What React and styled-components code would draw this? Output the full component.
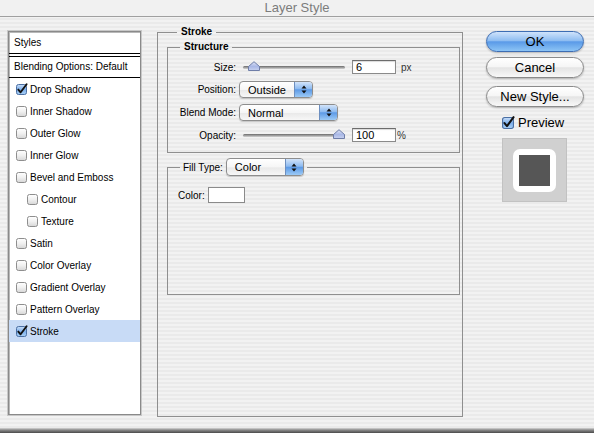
import React from 'react';
import styled, { createGlobalStyle } from 'styled-components';

const GlobalStyle = createGlobalStyle`
  html, body {
    margin: 0;
    padding: 0;
    background: #eeeeee;
  }
  body {
    font-family: "Liberation Sans", Arial, sans-serif;
    font-size: 10px;
    color: #000;
  }
`;

const pinstripe = `repeating-linear-gradient(to bottom, #f2f2f2 0px, #f2f2f2 2px, #eaeaea 2px, #eaeaea 4px)`;

const Window = styled.div`
  width: 594px;
  height: 433px;
  display: flex;
  flex-direction: column;
  background: ${pinstripe};
  overflow: hidden;
`;

const TitleBar = styled.div`
  height: 16px;
  line-height: 15px;
  border-bottom: 1px solid #a0a0a0;
  text-align: center;
  font-size: 13px;
  color: #7c7c7c;
  background: #f1f1f1;
`;

const Body = styled.div`
  flex: 1;
  display: flex;
  align-items: flex-start;
  padding-left: 8px;
`;

const BottomEdge = styled.div`
  height: 5px;
  background: linear-gradient(to bottom, #d6d6d6, #8a8a8a 40%, #4a4a4a);
`;

/* ---------- styles list ---------- */

const StyleList = styled.div`
  margin-top: 14px;
  width: 133px;
  height: 384px;
  box-sizing: border-box;
  background: #fff;
  border: 1px solid #8a8a8a;
  box-shadow: inset 1px 1px 0 #b8b8b8, 0 0 0 1px #c8c8c8;
  display: flex;
  flex-direction: column;
`;

const ListHeader = styled.div`
  height: 21px;
  line-height: 21px;
  padding-left: 5px;
  border-bottom: 1px solid #000;
`;

const BlendingRow = styled.div`
  margin-top: 2px;
  height: 20px;
  line-height: 20px;
  padding-left: 5px;
  border-top: 1px solid #000;
  border-bottom: 1px solid #000;
`;

const StyleItem = styled.div`
  height: 22px;
  display: flex;
  align-items: center;
  gap: 3px;
  padding-left: ${p => (p.$indent ? 18 : 7)}px;
  background: ${p => (p.$selected ? '#c8dbf6' : 'transparent')};
`;

const Check = ({ checked, size = 11 }) => (
  <svg width={size} height={size} viewBox="0 0 11 11" style={{ flex: 'none', overflow: 'visible' }}>
    <defs>
      <linearGradient id="cbOff" x1="0" y1="0" x2="0" y2="1">
        <stop offset="0" stopColor="#ffffff" />
        <stop offset="0.5" stopColor="#f0f0f0" />
        <stop offset="1" stopColor="#d6d6d6" />
      </linearGradient>
      <linearGradient id="cbOn" x1="0" y1="0" x2="0" y2="1">
        <stop offset="0" stopColor="#c9def8" />
        <stop offset="0.5" stopColor="#7eb0ec" />
        <stop offset="1" stopColor="#a9d0f6" />
      </linearGradient>
    </defs>
    <rect x="0.5" y="0.5" width="10" height="10" rx="2" fill={checked ? 'url(#cbOn)' : 'url(#cbOff)'} stroke={checked ? '#4b6fa3' : '#8e8e8e'} />
    {checked && (
      <path d="M2.3 5.6 L4.6 8.3 L10.6 0.2" fill="none" stroke="#111" strokeWidth="1.9" strokeLinecap="round" strokeLinejoin="round" />
    )}
  </svg>
);

const styleItems = [
  { label: 'Drop Shadow', checked: true },
  { label: 'Inner Shadow' },
  { label: 'Outer Glow' },
  { label: 'Inner Glow' },
  { label: 'Bevel and Emboss' },
  { label: 'Contour', indent: true },
  { label: 'Texture', indent: true },
  { label: 'Satin' },
  { label: 'Color Overlay' },
  { label: 'Gradient Overlay' },
  { label: 'Pattern Overlay' },
  { label: 'Stroke', checked: true, selected: true },
];

/* ---------- group boxes ---------- */

const Group = styled.fieldset`
  margin: 0;
  min-width: 0;
  box-sizing: border-box;
  border: 1px solid #8f8f8f;
  padding: 0;
`;

const StrokeGroup = styled(Group)`
  margin: 9px 0 0 16px;
  width: 306px;
  height: 391px;
  padding: 3px 2px 0 9px;
`;

const GroupTitle = styled.legend`
  margin-left: ${p => p.$offset || 12}px;
  padding: 0 4px;
  font-weight: bold;
  line-height: 12px;
`;

const StructureGrid = styled.div`
  display: grid;
  grid-template-columns: 68px 1fr;
  grid-template-rows: 22px 23px 23px 22px;
  column-gap: 3px;
  align-items: center;
  padding: 3px 0 6px;
`;

const FieldLabel = styled.span`
  text-align: right;
  white-space: nowrap;
`;

const ControlCell = styled.div`
  display: flex;
  align-items: center;
`;

const Track = styled.div`
  position: relative;
  margin-left: 4px;
  width: 102px;
  height: 3px;
  border-radius: 2px;
  background: linear-gradient(to bottom, #6a6a6a, #a8a8a8 60%, #d4d4d4);
`;

const Thumb = styled.svg`
  position: absolute;
  top: -5px;
`;

const Slider = ({ value }) => (
  <Track>
    <Thumb width="12" height="10" viewBox="0 0 12 10" style={{ left: `${value * 90}px` }}>
      <defs>
        <linearGradient id="thumbFill" x1="0" y1="0" x2="0" y2="1">
          <stop offset="0" stopColor="#dfe5f7" />
          <stop offset="0.55" stopColor="#a9b8e6" />
          <stop offset="1" stopColor="#c8d2f0" />
        </linearGradient>
      </defs>
      <path d="M0.5 9.5 V5.5 L6 0.7 L11.5 5.5 V9.5 Z" fill="url(#thumbFill)" stroke="#6f7ea8" strokeLinejoin="round" />
    </Thumb>
  </Track>
);

const NumberBox = styled.div`
  margin-left: 7px;
  width: 44px;
  height: 14px;
  box-sizing: border-box;
  border: 1px solid #8a8a8a;
  border-top-color: #6c6c6c;
  background: #fff;
  box-shadow: inset 0 1px 1px rgba(0, 0, 0, 0.15);
  padding-left: 3px;
  font-size: 11px;
  line-height: 12px;
`;

const Unit = styled.span`
  margin-left: ${p => p.$gap}px;
  color: #333;
`;

const PopupBody = styled.div`
  display: flex;
  align-items: stretch;
  width: ${p => p.$width}px;
  height: ${p => p.$height || 17}px;
  box-sizing: border-box;
  border: 1px solid #8d8d8d;
  border-radius: 4px;
  background: linear-gradient(to bottom, #ffffff, #f6f6f6 50%, #e9e9e9 55%, #f7f7f7);
  box-shadow: 0 1px 1px rgba(0, 0, 0, 0.18);
  overflow: hidden;
`;

const PopupText = styled.span`
  flex: 1;
  padding-left: 8px;
  display: flex;
  align-items: center;
  font-size: 11px;
`;

const PopupArrows = styled.span`
  width: 17px;
  display: flex;
  align-items: center;
  justify-content: center;
  border-left: 1px solid #6d8fc0;
  background: linear-gradient(to bottom, #d3e4fa, #8ebbf0 45%, #5d9ae6 52%, #9ccaf6);
`;

const Popup = ({ value, width, height }) => (
  <PopupBody $width={width} $height={height}>
    <PopupText>{value}</PopupText>
    <PopupArrows>
      <svg width="6" height="9" viewBox="0 0 6 9">
        <path d="M3 0.5 L5.5 3.5 H0.5 Z M3 8.5 L5.5 5.5 H0.5 Z" fill="#111" />
      </svg>
    </PopupArrows>
  </PopupBody>
);

const FillGroup = styled(Group)`
  margin-top: 5px;
  height: 137px;
  padding: 11px 0 0 10px;
`;

const FillLegend = styled.legend`
  margin-left: 2px;
  padding: 0 3px;
  display: flex;
  align-items: center;
  gap: 3px;
`;

const ColorRow = styled.div`
  display: flex;
  align-items: center;
  gap: 3px;
`;

const Swatch = styled.div`
  width: 37px;
  height: 16px;
  box-sizing: border-box;
  border: 1px solid #8a8a8a;
  background: #fff;
`;

/* ---------- buttons and preview ---------- */

const ButtonColumn = styled.div`
  margin: 14px 0 0 23px;
  width: 98px;
  display: flex;
  flex-direction: column;
`;

const PillButton = styled.div`
  height: 21px;
  box-sizing: border-box;
  margin-top: ${p => p.$gap || 0}px;
  border-radius: 11px;
  border: 1px solid ${p => (p.$primary ? '#3d6db3' : '#8a8a8a')};
  background: ${p =>
    p.$primary
      ? 'linear-gradient(to bottom, #cfe3fb, #8fbdf1 45%, #5a9ae8 52%, #8cc4f5)'
      : 'linear-gradient(to bottom, #ffffff, #f6f6f6 45%, #e4e4e4 52%, #f8f8f8)'};
  box-shadow: 0 1px 2px rgba(0, 0, 0, 0.25);
  display: flex;
  align-items: center;
  justify-content: center;
  font-size: 13px;
`;

const PreviewToggle = styled.div`
  margin: 8px 0 0 16px;
  display: flex;
  align-items: center;
  gap: 4px;
  font-size: 13px;
`;

const PreviewBox = styled.div`
  margin: 8px 0 0 16px;
  width: 65px;
  height: 64px;
  box-sizing: border-box;
  border: 1px solid #c2c2c2;
  background: #d0d0d0;
  display: flex;
  align-items: center;
  justify-content: center;
`;

const PreviewStroke = styled.div`
  width: 43px;
  height: 43px;
  border-radius: 7px;
  background: #fff;
  display: flex;
  align-items: center;
  justify-content: center;
`;

const PreviewFill = styled.div`
  width: 31px;
  height: 31px;
  background: #565656;
`;

export default function App() {
  return (
    <Window>
      <GlobalStyle />
      <TitleBar>Layer Style</TitleBar>
      <Body>
        <StyleList>
          <ListHeader>Styles</ListHeader>
          <BlendingRow>Blending Options: Default</BlendingRow>
          {styleItems.map(item => (
            <StyleItem key={item.label} $indent={item.indent} $selected={item.selected}>
              <Check checked={item.checked} />
              <span>{item.label}</span>
            </StyleItem>
          ))}
        </StyleList>

        <StrokeGroup>
          <GroupTitle $offset={10}>Stroke</GroupTitle>
          <Group>
            <GroupTitle>Structure</GroupTitle>
            <StructureGrid>
              <FieldLabel>Size:</FieldLabel>
              <ControlCell>
                <Slider value={0.05} />
                <NumberBox>6</NumberBox>
                <Unit $gap={5}>px</Unit>
              </ControlCell>
              <FieldLabel>Position:</FieldLabel>
              <ControlCell>
                <Popup value="Outside" width={74} />
              </ControlCell>
              <FieldLabel>Blend Mode:</FieldLabel>
              <ControlCell>
                <Popup value="Normal" width={99} />
              </ControlCell>
              <FieldLabel>Opacity:</FieldLabel>
              <ControlCell>
                <Slider value={1} />
                <NumberBox>100</NumberBox>
                <Unit $gap={1}>%</Unit>
              </ControlCell>
            </StructureGrid>
          </Group>
          <FillGroup>
            <FillLegend>
              <span>Fill Type:</span>
              <Popup value="Color" width={78} height={18} />
            </FillLegend>
            <ColorRow>
              <span>Color:</span>
              <Swatch />
            </ColorRow>
          </FillGroup>
        </StrokeGroup>

        <ButtonColumn>
          <PillButton $primary>OK</PillButton>
          <PillButton $gap={5}>Cancel</PillButton>
          <PillButton $gap={8}>New Style...</PillButton>
          <PreviewToggle>
            <Check checked size={12} />
            <span>Preview</span>
          </PreviewToggle>
          <PreviewBox>
            <PreviewStroke>
              <PreviewFill />
            </PreviewStroke>
          </PreviewBox>
        </ButtonColumn>
      </Body>
      <BottomEdge />
    </Window>
  );
}
